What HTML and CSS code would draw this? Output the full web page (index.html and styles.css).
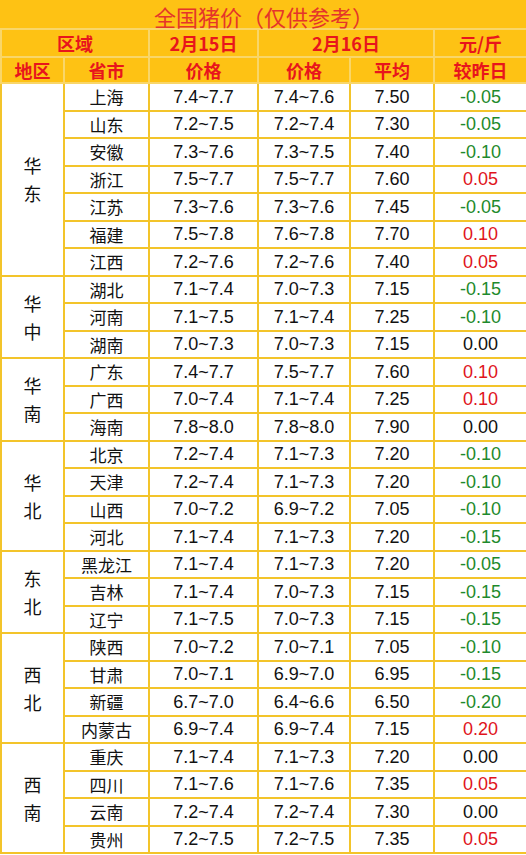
FILE: index.html
```html
<!DOCTYPE html>
<html lang="zh">
<head>
<meta charset="utf-8">
<title>全国猪价</title>
<link rel="stylesheet" href="styles.css">
</head>
<body>
<table class="price-table">
  <colgroup>
    <col class="c-area"><col class="c-prov"><col class="c-p15"><col class="c-p16"><col class="c-avg"><col class="c-chg">
  </colgroup>
  <thead>
    <tr class="row-title"><th colspan="6" class="title">全国猪价（仅供参考）</th></tr>
    <tr class="row-h1">
      <th colspan="2">区域</th>
      <th>2月15日</th>
      <th colspan="2">2月16日</th>
      <th>元/斤</th>
    </tr>
    <tr class="row-h2">
      <th>地区</th><th>省市</th><th>价格</th><th>价格</th><th>平均</th><th>较昨日</th>
    </tr>
  </thead>
  <tbody>
    <tr><td rowspan="7" class="area">华<br>东</td><td class="prov">上海</td><td>7.4~7.7</td><td>7.4~7.6</td><td>7.50</td><td class="down">-0.05</td></tr>
    <tr><td class="prov">山东</td><td>7.2~7.5</td><td>7.2~7.4</td><td>7.30</td><td class="down">-0.05</td></tr>
    <tr><td class="prov">安徽</td><td>7.3~7.6</td><td>7.3~7.5</td><td>7.40</td><td class="down">-0.10</td></tr>
    <tr><td class="prov">浙江</td><td>7.5~7.7</td><td>7.5~7.7</td><td>7.60</td><td class="up">0.05</td></tr>
    <tr><td class="prov">江苏</td><td>7.3~7.6</td><td>7.3~7.6</td><td>7.45</td><td class="down">-0.05</td></tr>
    <tr><td class="prov">福建</td><td>7.5~7.8</td><td>7.6~7.8</td><td>7.70</td><td class="up">0.10</td></tr>
    <tr><td class="prov">江西</td><td>7.2~7.6</td><td>7.2~7.6</td><td>7.40</td><td class="up">0.05</td></tr>

    <tr><td rowspan="3" class="area">华<br>中</td><td class="prov">湖北</td><td>7.1~7.4</td><td>7.0~7.3</td><td>7.15</td><td class="down">-0.15</td></tr>
    <tr><td class="prov">河南</td><td>7.1~7.5</td><td>7.1~7.4</td><td>7.25</td><td class="down">-0.10</td></tr>
    <tr><td class="prov">湖南</td><td>7.0~7.3</td><td>7.0~7.3</td><td>7.15</td><td>0.00</td></tr>

    <tr><td rowspan="3" class="area">华<br>南</td><td class="prov">广东</td><td>7.4~7.7</td><td>7.5~7.7</td><td>7.60</td><td class="up">0.10</td></tr>
    <tr><td class="prov">广西</td><td>7.0~7.4</td><td>7.1~7.4</td><td>7.25</td><td class="up">0.10</td></tr>
    <tr><td class="prov">海南</td><td>7.8~8.0</td><td>7.8~8.0</td><td>7.90</td><td>0.00</td></tr>

    <tr><td rowspan="4" class="area">华<br>北</td><td class="prov">北京</td><td>7.2~7.4</td><td>7.1~7.3</td><td>7.20</td><td class="down">-0.10</td></tr>
    <tr><td class="prov">天津</td><td>7.2~7.4</td><td>7.1~7.3</td><td>7.20</td><td class="down">-0.10</td></tr>
    <tr><td class="prov">山西</td><td>7.0~7.2</td><td>6.9~7.2</td><td>7.05</td><td class="down">-0.10</td></tr>
    <tr><td class="prov">河北</td><td>7.1~7.4</td><td>7.1~7.3</td><td>7.20</td><td class="down">-0.15</td></tr>

    <tr><td rowspan="3" class="area">东<br>北</td><td class="prov">黑龙江</td><td>7.1~7.4</td><td>7.1~7.3</td><td>7.20</td><td class="down">-0.05</td></tr>
    <tr><td class="prov">吉林</td><td>7.1~7.4</td><td>7.0~7.3</td><td>7.15</td><td class="down">-0.15</td></tr>
    <tr><td class="prov">辽宁</td><td>7.1~7.5</td><td>7.0~7.3</td><td>7.15</td><td class="down">-0.15</td></tr>

    <tr><td rowspan="4" class="area">西<br>北</td><td class="prov">陕西</td><td>7.0~7.2</td><td>7.0~7.1</td><td>7.05</td><td class="down">-0.10</td></tr>
    <tr><td class="prov">甘肃</td><td>7.0~7.1</td><td>6.9~7.0</td><td>6.95</td><td class="down">-0.15</td></tr>
    <tr><td class="prov">新疆</td><td>6.7~7.0</td><td>6.4~6.6</td><td>6.50</td><td class="down">-0.20</td></tr>
    <tr><td class="prov">内蒙古</td><td>6.9~7.4</td><td>6.9~7.4</td><td>7.15</td><td class="up">0.20</td></tr>

    <tr><td rowspan="4" class="area">西<br>南</td><td class="prov">重庆</td><td>7.1~7.4</td><td>7.1~7.3</td><td>7.20</td><td>0.00</td></tr>
    <tr><td class="prov">四川</td><td>7.1~7.6</td><td>7.1~7.6</td><td>7.35</td><td class="up">0.05</td></tr>
    <tr><td class="prov">云南</td><td>7.2~7.4</td><td>7.2~7.4</td><td>7.30</td><td>0.00</td></tr>
    <tr><td class="prov">贵州</td><td>7.2~7.5</td><td>7.2~7.5</td><td>7.35</td><td class="up">0.05</td></tr>
  </tbody>
</table>
</body>
</html>
```

FILE: styles.css
```css
html, body {
  margin: 0;
  padding: 0;
  background: #ffffff;
}

.price-table {
  width: 526px;
  table-layout: fixed;
  border-collapse: collapse;
  font-family: "Liberation Sans", "Noto Sans CJK SC", sans-serif;
}

.c-area { width: 63px; }
.c-prov { width: 85px; }
.c-p15 { width: 109px; }
.c-p16 { width: 92px; }
.c-avg { width: 84px; }
.c-chg { width: 93px; }

.price-table thead th {
  background: #fec214;
  color: #e8151c;
  font-family: "Noto Sans CJK SC", sans-serif;
  font-weight: 700;
  font-size: 18px;
  border: 2px solid #f9d669;
  padding: 0;
  line-height: 1;
  text-align: center;
}

.row-title { height: 29px; }
.row-h1 { height: 28px; }
.row-h2 { height: 26px; }

.price-table thead th.title {
  font-weight: 400;
  font-size: 22px;
  line-height: 24px;
  padding-top: 4px;
  color: #e5352a;
  border-top: 0;
  border-left-color: #fec214;
  border-right-color: #fec214;
}

.price-table tbody tr {
  height: 27.5px;
}

.price-table td {
  border: 2px solid #f3c42a;
  padding: 0;
  text-align: center;
  color: #111111;
  font-size: 18px;
  line-height: 1;
  background: #ffffff;
}

.price-table td.prov {
  font-family: "Noto Sans CJK SC", sans-serif;
  font-size: 17px;
}

.price-table td.area {
  font-family: "Noto Sans CJK SC", sans-serif;
  font-size: 18px;
  line-height: 28px;
}

.price-table td.down { color: #1e8a2c; }
.price-table td.up { color: #e0141c; }
```
